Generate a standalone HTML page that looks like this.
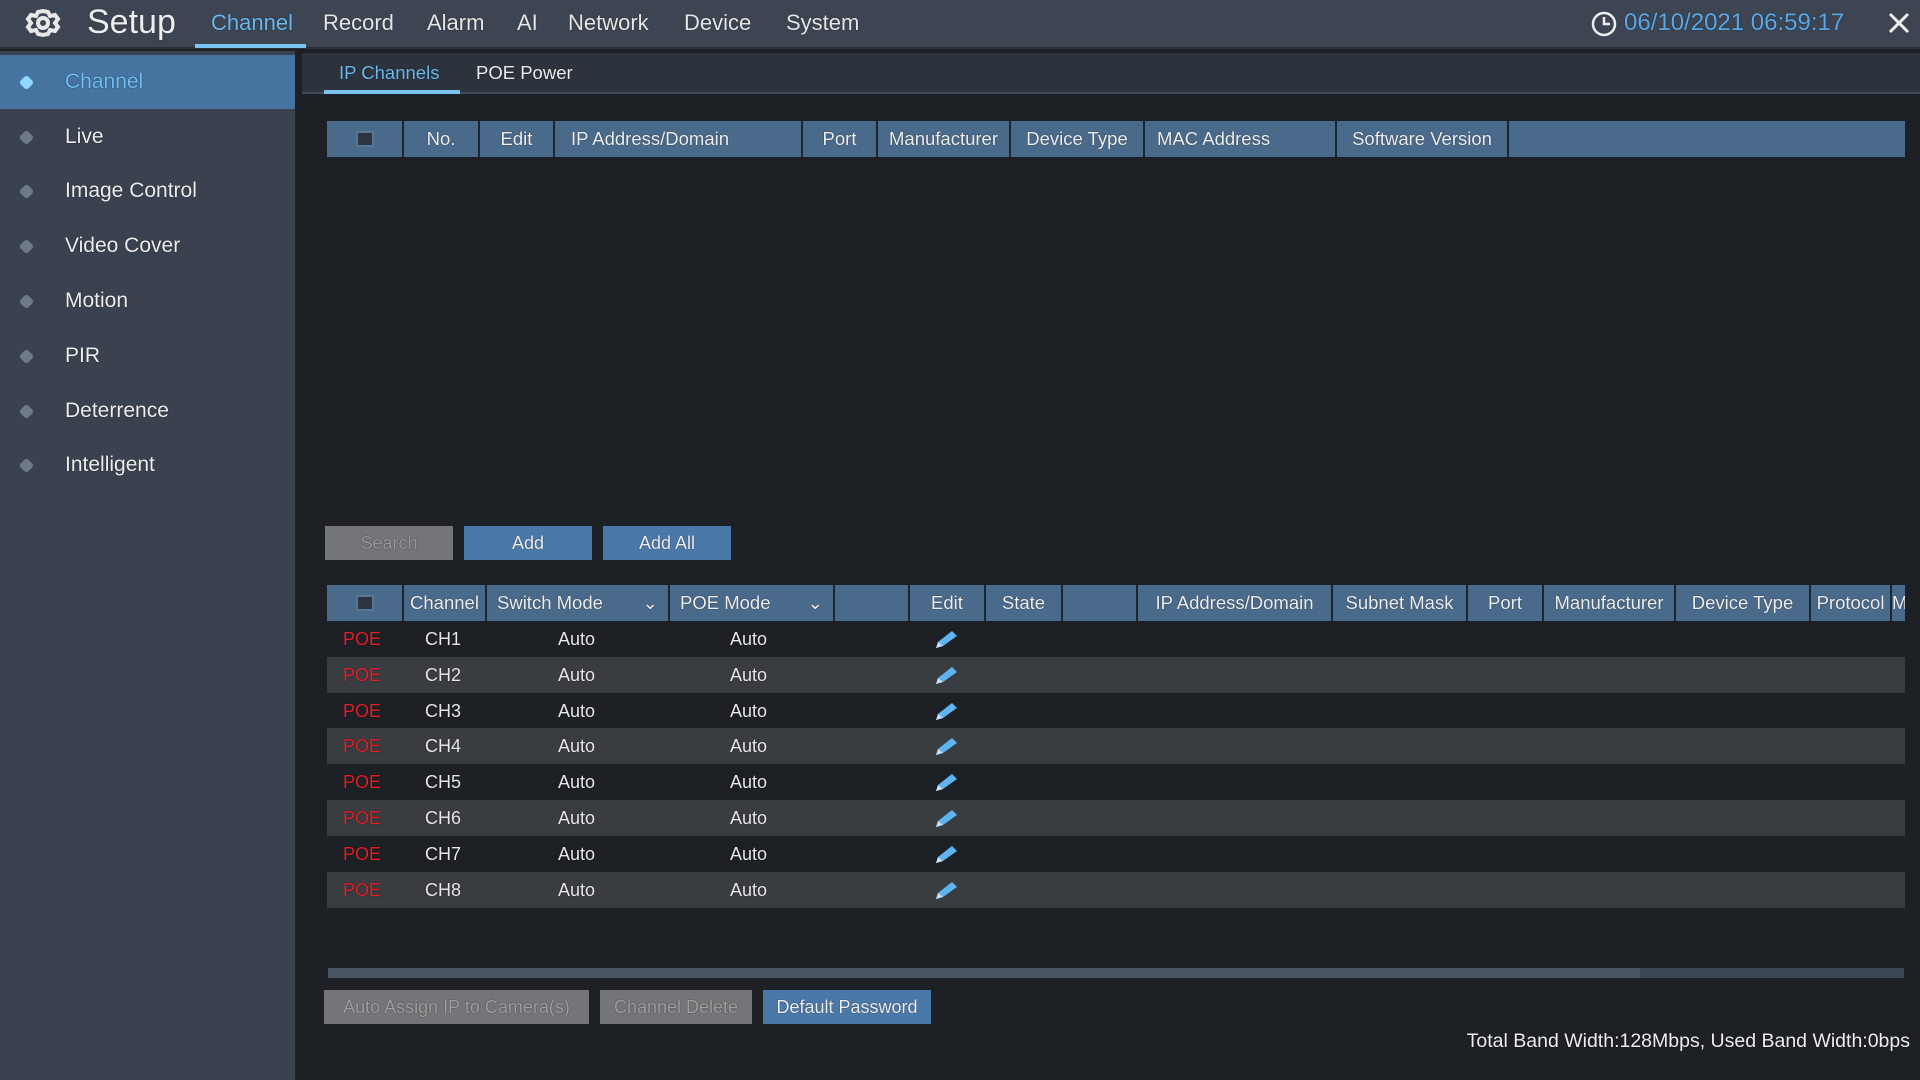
<!DOCTYPE html>
<html><head><meta charset="utf-8"><style>
*{margin:0;padding:0;box-sizing:border-box}
body{width:1920px;height:1080px;background:#1d2024;font-family:"Liberation Sans",Arial,sans-serif;position:relative;overflow:hidden;color:#e8e8e8;text-shadow:0 0 1px rgba(0,0,0,.8)}
.a{position:absolute}
#top{left:0;top:0;width:1920px;height:49px;background:#3d4553;border-bottom:2px solid #2a2f36}
.nav{top:10px;font-size:22px;color:#e6e6e6}
#side{left:0;top:51px;width:295px;height:1029px;background:#3a4250}
.si{left:0;width:295px;height:54px;font-size:21px;color:#eee;line-height:54px;padding-left:65px;text-shadow:0 0 1px #000}
.si .dot{position:absolute;left:21px;top:22px;width:11px;height:11px;transform:rotate(45deg);background:#6f7a87;border-radius:3px}
.sel{background:#4674a0;color:#6fc0f4}
.sel .dot{background:#8fd8ff}
#sub{left:302px;top:53px;width:1618px;height:41px;background:#2c333d;border-bottom:2px solid #3d4a58}
.hd{height:36px;background:#4a6a8c;display:flex}
.hd div{border-right:2px solid #1d2530;font-size:18.5px;color:#eee;display:flex;align-items:center;justify-content:center;white-space:nowrap;overflow:hidden}
.cb{width:18px;height:16px;background:#2b3440;border:2px solid #5a7696}
.btn{height:34px;font-size:18px;display:flex;align-items:center;justify-content:center;color:#eee}
.row{left:327px;width:1578px;height:36px;font-size:18px}
.row span{position:absolute;top:8px}
</style></head><body>
<div id="top" class="a">
<svg class="a" style="left:20px;top:4px" width="46" height="40" viewBox="0 0 46 40"><g fill="none" stroke="#e8e8e8" stroke-width="4"><path d="M23 3 l5 1 2 4 5 -1 3 4 -3 4 3 4 -3 4 -5 -1 -2 4 -5 1 -5 -1 -2 -4 -5 1 -3 -4 3 -4 -3 -4 3 -4 5 1 2 -4z" transform="translate(0,4)"/><circle cx="23" cy="19" r="5"/></g></svg>
<div class="a" style="left:87px;top:3px;font-size:34px;color:#eee">Setup</div>
<div class="a nav" style="left:211px;color:#6bb8ec">Channel</div>
<div class="a" style="left:195px;top:44px;width:111px;height:4px;background:#7cc4f0"></div>
<div class="a nav" style="left:323px">Record</div>
<div class="a nav" style="left:427px">Alarm</div>
<div class="a nav" style="left:517px">AI</div>
<div class="a nav" style="left:568px">Network</div>
<div class="a nav" style="left:684px">Device</div>
<div class="a nav" style="left:786px">System</div>
<svg class="a" style="left:1590px;top:10px" width="28" height="28" viewBox="0 0 28 28"><circle cx="14" cy="14" r="11" fill="none" stroke="#eee" stroke-width="2.5"/><path d="M14 7v7h6" fill="none" stroke="#eee" stroke-width="2.5"/></svg>
<div class="a" style="left:1624px;top:9px;font-size:24px;color:#5aa8e8">06/10/2021 06:59:17</div>
<svg class="a" style="left:1887px;top:12px" width="24" height="22" viewBox="0 0 24 22"><path d="M3 2L21 20M21 2L3 20" stroke="#eee" stroke-width="3"/></svg>
</div>
<div id="side" class="a">
<div class="a si sel" style="top:4px"><i class="dot"></i>Channel</div>
<div class="a si" style="top:59px"><i class="dot"></i>Live</div>
<div class="a si" style="top:113px"><i class="dot"></i>Image Control</div>
<div class="a si" style="top:168px"><i class="dot"></i>Video Cover</div>
<div class="a si" style="top:223px"><i class="dot"></i>Motion</div>
<div class="a si" style="top:278px"><i class="dot"></i>PIR</div>
<div class="a si" style="top:333px"><i class="dot"></i>Deterrence</div>
<div class="a si" style="top:387px"><i class="dot"></i>Intelligent</div>
</div>
<div id="sub" class="a">
<div class="a" style="left:37px;top:9px;font-size:18.5px;color:#6bb8ec">IP Channels</div>
<div class="a" style="left:174px;top:9px;font-size:18.5px;color:#eee">POE Power</div>
<div class="a" style="left:22px;top:37px;width:136px;height:4px;background:#7cc4f0"></div>
</div>
<div class="a hd" style="left:327px;top:121px;width:1578px">
<div style="width:77px"><i class="cb"></i></div><div style="width:76px">No.</div><div style="width:75px">Edit</div><div style="width:248px;justify-content:flex-start;padding-left:16px">IP Address/Domain</div><div style="width:75px">Port</div><div style="width:133px">Manufacturer</div><div style="width:134px">Device Type</div><div style="width:192px;justify-content:flex-start;padding-left:12px">MAC Address</div><div style="width:172px">Software Version</div><div style="flex:1;border:none"></div>
</div>
<div class="a btn" style="left:325px;top:526px;width:128px;background:#747578;color:#9a9a9a">Search</div>
<div class="a btn" style="left:464px;top:526px;width:128px;background:#4a78a8">Add</div>
<div class="a btn" style="left:603px;top:526px;width:128px;background:#4a78a8">Add All</div>
<div class="a hd" style="left:327px;top:585px;width:1578px">
<div style="width:77px"><i class="cb"></i></div><div style="width:83px">Channel</div><div style="width:183px;justify-content:space-between;padding:0 10px">Switch Mode<span>&#8964;</span></div><div style="width:165px;justify-content:space-between;padding:0 10px">POE Mode<span>&#8964;</span></div><div style="width:75px"></div><div style="width:76px">Edit</div><div style="width:77px">State</div><div style="width:75px"></div><div style="width:195px">IP Address/Domain</div><div style="width:135px">Subnet Mask</div><div style="width:76px">Port</div><div style="width:132px">Manufacturer</div><div style="width:135px">Device Type</div><div style="width:81px">Protocol</div><div style="flex:1;border:none;justify-content:flex-start">M</div>
</div>
<div id="rows"></div>
<div class="a" style="left:328px;top:968px;width:1576px;height:10px;background:#4a5564"></div>
<div class="a" style="left:1640px;top:968px;width:264px;height:10px;background:#3c4552"></div>
<div class="a btn" style="left:324px;top:990px;width:265px;background:#747578;color:#a0a0a0">Auto Assign IP to Camera(s)</div>
<div class="a btn" style="left:600px;top:990px;width:152px;background:#747578;color:#a0a0a0">Channel Delete</div>
<div class="a btn" style="left:763px;top:990px;width:168px;background:#4a78a8">Default Password</div>
<div class="a" style="right:10px;top:1030px;font-size:19.5px;color:#eee">Total Band Width:128Mbps, Used Band Width:0bps</div>
<script>
var h='';for(var i=0;i<8;i++){var t=621+i*35.8;h+='<div class="a row" style="top:'+t+'px;background:'+(i%2?'#393c41':'#1d2024')+'"><span style="left:16px;color:#e0202a">POE</span><span style="left:98px">CH'+(i+1)+'</span><span style="left:231px">Auto</span><span style="left:403px">Auto</span><svg style="position:absolute;left:605px;top:7px" width="28" height="22" viewBox="0 0 28 22"><path d="M4 20L6 14 20 3 25 8 11 18Z" fill="#5fb4f0"/><path d="M4 20L6 14 11 18Z" fill="#cde"/></svg></div>';}
document.getElementById('rows').innerHTML=h;
</script>
</body></html>
